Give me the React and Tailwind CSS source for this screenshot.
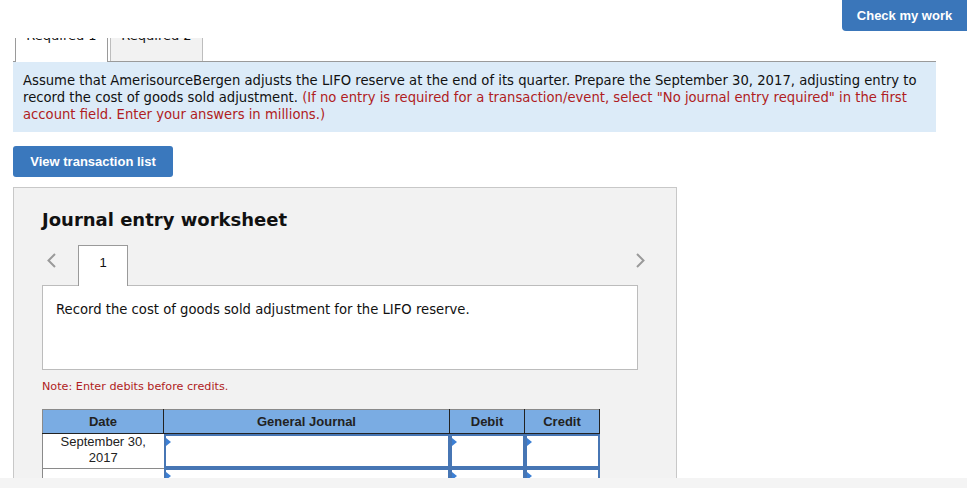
import React from "react";

function Tri() {
  return (
    <span className="absolute left-0 top-[2px] w-0 h-0 border-y-[4px] border-y-transparent border-l-[5px] border-l-[#3c7fd4]" />
  );
}

function InputCell({ h }) {
  return (
    <td className="p-0 align-top">
      <div className={`relative ${h} border-2 border-[#4776b4] bg-white`}>
        <Tri />
      </div>
    </td>
  );
}

export default function App() {
  return (
    <div className="w-[967px] h-[488px] overflow-hidden bg-white flex flex-col font-['DejaVu_Sans',sans-serif] text-[#111]">
      {/* header */}
      <div className="h-[38px] shrink-0 flex justify-end items-start">
        <button className="h-[31px] w-[125px] bg-[#3a76ba] rounded-bl-[4px] text-white font-bold text-[13px] font-['Liberation_Sans',sans-serif]">
          Check my work
        </button>
      </div>

      {/* main scroll region */}
      <div className="h-[440px] shrink-0 overflow-hidden">
        <div className="ml-[13px] w-[923px]">
          {/* tabs */}
          <div className="flex -mt-[10px] h-[34px] border-b border-[#9a9a9a]">
            <div className="ml-[2px] w-[93px] h-[34px] border-x border-[#9a9a9a] bg-white text-center text-[13px] leading-[16px] relative z-10">
              Required 1
            </div>
            <div className="ml-[2px] w-[93px] h-[33px] border-x border-[#bdbdbd] bg-[#f2f2f2] text-center text-[13px] leading-[16px]">
              Required 2
            </div>
          </div>

          {/* instructions */}
          <div className="bg-[#dcebf8] px-[10px] pt-[10px] pb-[9px] text-[13.2px] leading-[17px] text-[#111]">
            Assume that AmerisourceBergen adjusts the LIFO reserve at the end of its quarter. Prepare the September 30, 2017, adjusting entry to record the cost of goods sold adjustment.{" "}
            <span className="text-[#b01c22]">
              (If no entry is required for a transaction/event, select "No journal entry required" in the first account field. Enter your answers in millions.)
            </span>
          </div>

          <button className="mt-[14px] w-[160px] h-[31px] bg-[#3a78bd] rounded-[3px] text-white font-bold text-[13px] font-['Liberation_Sans',sans-serif]">
            View transaction list
          </button>

          {/* worksheet panel */}
          <div className="mt-[10px] w-[664px] h-[300px] border border-[#c8c8c8] bg-[#f2f2f2] pl-[28px] pt-[20px]">
            <h2 className="text-[18px] leading-[23px] font-bold text-[#111]">Journal entry worksheet</h2>

            <div className="mt-[14px] w-[603px] flex items-start">
              <div className="w-[36px] h-[40px] pl-[5px] pt-[8px]">
                <svg width="9" height="15" viewBox="0 0 9 15">
                  <polyline points="8,1 1.5,7.5 8,14" fill="none" stroke="#9a9a9a" strokeWidth="2" />
                </svg>
              </div>
              <div className="w-[50px] h-[41px] -mb-[1px] border-t border-x border-[#9a9a9a] bg-white text-center text-[13px] leading-[16px] pt-[9px] relative z-10 font-['Liberation_Sans',sans-serif]">
                1
              </div>
              <div className="ml-auto pt-[8px]">
                <svg width="9" height="15" viewBox="0 0 9 15">
                  <polyline points="1,1 7.5,7.5 1,14" fill="none" stroke="#9a9a9a" strokeWidth="2" />
                </svg>
              </div>
            </div>

            <div className="w-[596px] h-[85px] border border-[#bcbcbc] bg-white pt-[15px] pl-[13px] text-[13.2px] leading-[17px]">
              Record the cost of goods sold adjustment for the LIFO reserve.
            </div>

            <div className="mt-[10px] text-[11.2px] leading-[14px] text-[#b01c22]">
              Note: Enter debits before credits.
            </div>

            <table className="mt-[15px] border-collapse font-['Liberation_Sans',sans-serif] text-[13px] table-fixed w-[557px]">
              <colgroup>
                <col className="w-[121px]" />
                <col className="w-[286px]" />
                <col className="w-[75px]" />
                <col className="w-[75px]" />
              </colgroup>
              <thead>
                <tr className="h-[24px] bg-[#7aace3] text-[#222]">
                  <th className="font-bold border-t border-t-[#8a8a8a] border-l border-l-[#8a8a8a] border-r border-r-[#222] border-b border-b-[#222]">Date</th>
                  <th className="font-bold border-t border-t-[#8a8a8a] border-r border-r-[#222] border-b border-b-[#222]">General Journal</th>
                  <th className="font-bold border-t border-t-[#8a8a8a] border-r border-r-[#222] border-b border-b-[#222]">Debit</th>
                  <th className="font-bold border-t border-t-[#8a8a8a] border-r border-r-[#222] border-b border-b-[#222]">Credit</th>
                </tr>
              </thead>
              <tbody>
                <tr>
                  <td className="h-[34px] p-0 align-top text-center leading-[16px] text-[#222] bg-white border-l border-b border-[#8a8a8a]">
                    September 30,<br />2017
                  </td>
                  <InputCell h="h-[34px]" />
                  <InputCell h="h-[34px]" />
                  <InputCell h="h-[34px]" />
                </tr>
                <tr>
                  <td className="h-[34px] p-0 bg-white border-l border-b border-[#8a8a8a]" />
                  <InputCell h="h-[34px]" />
                  <InputCell h="h-[34px]" />
                  <InputCell h="h-[34px]" />
                </tr>
              </tbody>
            </table>
          </div>
        </div>
      </div>

      <div className="h-[10px] shrink-0 bg-[#f4f4f4]" />
    </div>
  );
}
